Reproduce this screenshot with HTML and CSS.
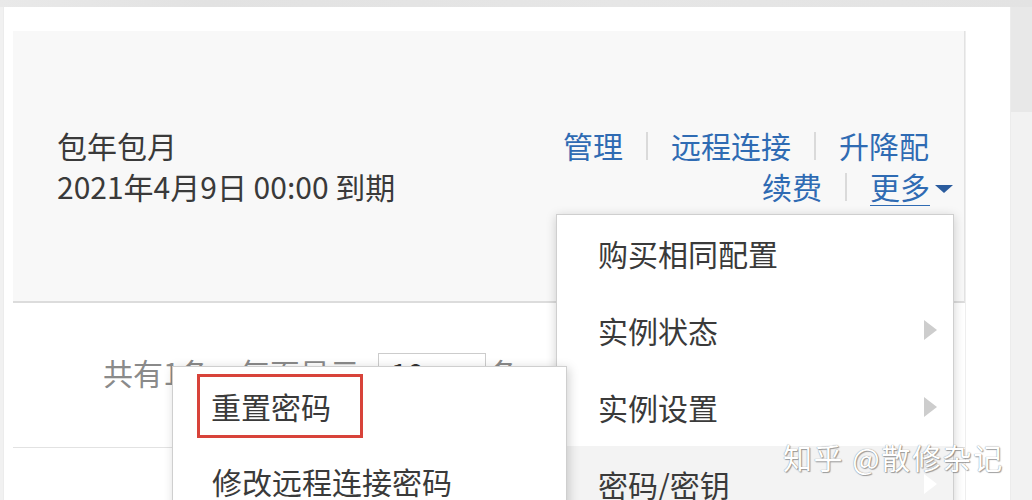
FILE: index.html
```html
<!DOCTYPE html>
<html lang="zh-CN">
<head>
    <meta charset="UTF-8">
    <meta name="viewport" content="width=device-width, initial-scale=1.0">
    <title>实例列表</title>
    <link rel="stylesheet" href="styles.css">
</head>
<body>
    <div class="topbar"></div>
    <div class="layout">
        <div class="panel">
            <div class="table">
                <div class="instance">
                    <div class="billing">
                        <div>包年包月</div>
                        <div>2021年4月9日 00:00 到期</div>
                    </div>
                    <div class="actions">
                        <div class="action-row first">
                            <a href="#">管理</a><span class="sep"></span><a href="#">远程连接</a><span class="sep"></span><a href="#">升降配</a>
                        </div>
                        <div class="action-row">
                            <a href="#">续费</a><span class="sep"></span><a href="#" class="more">更多</a><i class="caret"></i>
                        </div>
                    </div>
                </div>
                <div class="pager">
                    <span>共有1条，每页显示</span>
                    <span class="page-size">10</span>
                    <span class="unit">条</span>
                </div>
                <div class="row-empty"></div>
            </div>
        </div>
        <div class="gutter"></div>
    </div>

    <!-- 更多 下拉菜单 -->
    <ul class="menu">
        <li>购买相同配置</li>
        <li class="has-sub">实例状态</li>
        <li class="has-sub">实例设置</li>
        <li class="has-sub active">密码/密钥</li>
    </ul>

    <!-- 密码/密钥 子菜单 -->
    <ul class="submenu">
        <li class="marked"><span class="mark">重置密码</span></li>
        <li>修改远程连接密码</li>
    </ul>

    <div class="watermark">知乎 @散修杂记</div>
</body>
</html>
```

FILE: styles.css
```css
body {
    margin: 0;
    font-family: "Noto Sans CJK SC", "Microsoft YaHei", sans-serif;
    font-size: 30px;
    color: #333;
    background: #f1f1f1;
    position: relative;
    height: 500px;
    overflow: hidden;
}
a {
    color: #2f6bb3;
    text-decoration: none;
}
ul {
    margin: 0;
    padding: 0;
    list-style: none;
}
.topbar {
    height: 7px;
    background: linear-gradient(90deg, #e9e9e9 0, #e2e2e2 20%, #e6e6e6 60%, #e3e3e3 100%);
}
.layout {
    display: flex;
    height: 493px;
}
.panel {
    width: 1008px;
    margin-left: 3px;
    padding: 24px 0 0 9px;
    box-sizing: border-box;
    background: #fff;
    border-left: 1px solid #ececec;
    border-right: 1px solid #ececec;
}
.gutter {
    flex: 1;
    background: linear-gradient(#e8e8e8 0, #e8e8e8 105px, #f2f2f2 105px);
}
.table {
    width: 953px;
    height: 100%;
    border-right: 1px solid #eee;
    box-sizing: border-box;
}
.instance {
    height: 272px;
    box-sizing: border-box;
    display: flex;
    justify-content: space-between;
    align-items: center;
    padding: 0 11px 0 44px;
    background: #f8f8f8;
    border-right: 1px solid #e2e2e2;
    border-bottom: 2px solid #dcdcdc;
}
.billing {
    line-height: 41px;
    color: #3a3a3a;
}
.actions {
    text-align: right;
    line-height: 41px;
}
.action-row {
    display: flex;
    justify-content: flex-end;
    align-items: center;
}
.action-row.first {
    margin-right: 24px;
}
.sep {
    display: inline-block;
    width: 2px;
    height: 28px;
    margin: 0 23px;
    background: #dadada;
}
.more {
    text-decoration: underline;
    text-underline-offset: 6px;
    text-decoration-thickness: 1px;
}
.caret {
    display: inline-block;
    width: 0;
    height: 0;
    margin-left: 5px;
    margin-top: 4px;
    border-left: 9px solid transparent;
    border-right: 9px solid transparent;
    border-top: 8px solid #2b5c9e;
}
.pager {
    height: 145px;
    box-sizing: border-box;
    display: flex;
    align-items: center;
    padding: 0 0 6px 90px;
    border-bottom: 1px solid #e2e2e2;
    color: #8a8a8a;
}
.page-size {
    display: inline-block;
    width: 108px;
    height: 38px;
    line-height: 38px;
    margin-left: 18px;
    padding-left: 12px;
    box-sizing: border-box;
    border: 1px solid #ccc;
    color: #333;
    background: #fff;
}
.unit {
    margin-left: 3px;
}
.menu {
    position: absolute;
    left: 556px;
    top: 214px;
    width: 398px;
    height: 320px;
    box-sizing: border-box;
    background: #fff;
    border: 1px solid #cfcfcf;
    box-shadow: 0 2px 10px rgba(0, 0, 0, 0.18);
}
.menu li {
    position: relative;
    height: 77px;
    line-height: 77px;
    padding-left: 41px;
    color: #3a3a3a;
}
.menu li.has-sub::after {
    content: "";
    position: absolute;
    right: 16px;
    top: 28px;
    border-top: 10px solid transparent;
    border-bottom: 10px solid transparent;
    border-left: 13px solid #cdcdcd;
}
.menu li.active {
    background: #f3f3f3;
}
.menu li.active::after {
    border-left-color: #fff;
}
.submenu {
    position: absolute;
    left: 172px;
    top: 366px;
    width: 395px;
    height: 160px;
    box-sizing: border-box;
    padding-top: 1px;
    background: #fff;
    border: 1px solid #cfcfcf;
    box-shadow: 2px 2px 10px rgba(0, 0, 0, 0.18);
}
.submenu li {
    height: 75px;
    display: flex;
    align-items: center;
    padding-left: 39px;
    color: #3a3a3a;
}
.submenu li.marked {
    padding-left: 24px;
}
.mark {
    display: inline-block;
    height: 58px;
    line-height: 58px;
    padding: 0 29px 0 11px;
    border: 3px solid #d8433a;
}
.watermark {
    position: absolute;
    left: 783px;
    top: 436px;
    font-size: 29px;
    letter-spacing: 1.6px;
    color: #fff;
    text-shadow: 0 0 1px #6f6f6f, 1px 1px 1px rgba(0, 0, 0, 0.35);
}
```
